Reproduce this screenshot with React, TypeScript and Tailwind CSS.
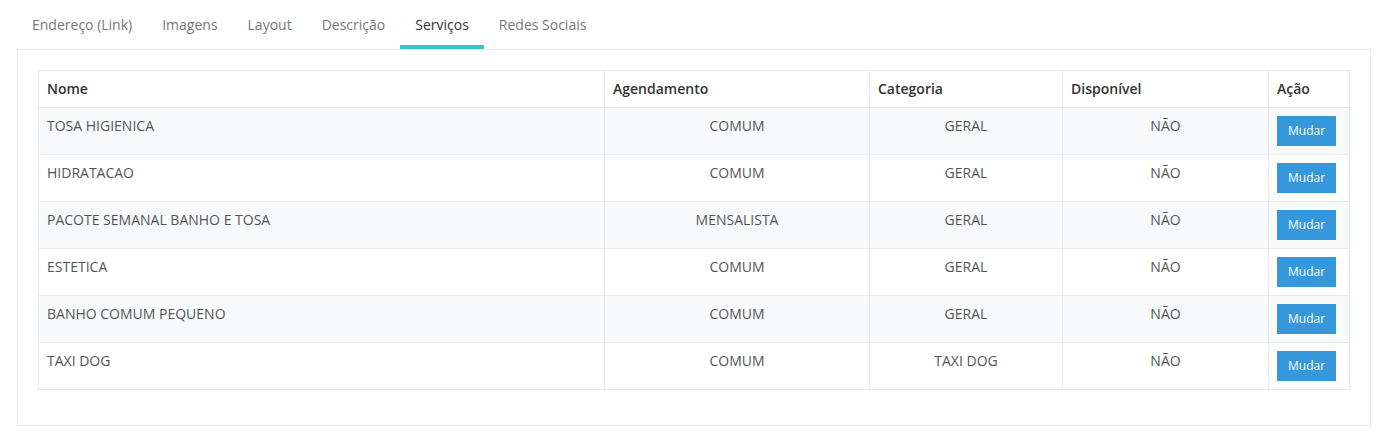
const TABS = ["Endereço (Link)", "Imagens", "Layout", "Descrição", "Serviços", "Redes Sociais"];
const ACTIVE_TAB = "Serviços";

const SERVICOS = [
  { nome: "TOSA HIGIENICA", agendamento: "COMUM", categoria: "GERAL", disponivel: "NÃO" },
  { nome: "HIDRATACAO", agendamento: "COMUM", categoria: "GERAL", disponivel: "NÃO" },
  { nome: "PACOTE SEMANAL BANHO E TOSA", agendamento: "MENSALISTA", categoria: "GERAL", disponivel: "NÃO" },
  { nome: "ESTETICA", agendamento: "COMUM", categoria: "GERAL", disponivel: "NÃO" },
  { nome: "BANHO COMUM PEQUENO", agendamento: "COMUM", categoria: "GERAL", disponivel: "NÃO" },
  { nome: "TAXI DOG", agendamento: "COMUM", categoria: "TAXI DOG", disponivel: "NÃO" },
];

export default function App() {
  return (
    <div className="min-h-screen bg-white pl-[17px] pr-[19px] pt-[5px] font-['Open_Sans',sans-serif] text-[14px] leading-[20px]">
      {/* Tabs */}
      <ul className="flex">
        {TABS.map((tab) => {
          const active = tab === ACTIVE_TAB;
          return (
            <li key={tab}>
              <a
                href="#"
                className={`block px-[15px] pt-[10px] pb-[10px] border-b-4 ${
                  active ? "border-[#3ac3cf] text-[#333]" : "border-transparent text-[#777]"
                }`}
              >
                {tab}
              </a>
            </li>
          );
        })}
      </ul>

      {/* Panel */}
      <div className="border border-[#e7eaec] px-[20px] pt-[20px] pb-[35px]">
        <table className="w-full table-fixed border-collapse border border-[#e7eaec] text-[#555]">
          <colgroup>
            <col className="w-[566px]" />
            <col className="w-[265px]" />
            <col className="w-[193px]" />
            <col className="w-[206px]" />
            <col />
          </colgroup>
          <thead>
            <tr className="text-[#333] font-semibold">
              <th className="border border-[#e7eaec] p-[8px] text-left font-semibold">Nome</th>
              <th className="border border-[#e7eaec] p-[8px] text-left font-semibold">Agendamento</th>
              <th className="border border-[#e7eaec] p-[8px] text-left font-semibold">Categoria</th>
              <th className="border border-[#e7eaec] p-[8px] text-left font-semibold">Disponível</th>
              <th className="border border-[#e7eaec] p-[8px] text-left font-semibold">Ação</th>
            </tr>
          </thead>
          <tbody>
            {SERVICOS.map((s, i) => (
              <tr key={s.nome} className={i % 2 === 0 ? "bg-[#f9fafc]" : "bg-white"}>
                <td className="border border-[#e7eaec] p-[8px] align-top">{s.nome}</td>
                <td className="border border-[#e7eaec] p-[8px] align-top text-center">{s.agendamento}</td>
                <td className="border border-[#e7eaec] p-[8px] align-top text-center">{s.categoria}</td>
                <td className="border border-[#e7eaec] p-[8px] align-top text-center">{s.disponivel}</td>
                <td className="border border-[#e7eaec] p-[8px] align-top">
                  <button className="block border border-[#3498db] bg-[#3498db] px-[10px] py-[5px] text-[12px] leading-[18px] text-white">
                    Mudar
                  </button>
                </td>
              </tr>
            ))}
          </tbody>
        </table>
      </div>
    </div>
  );
}
